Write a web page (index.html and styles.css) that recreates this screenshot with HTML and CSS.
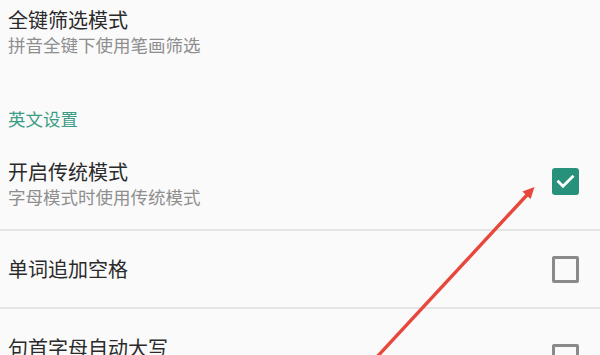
FILE: index.html
```html
<!DOCTYPE html>
<html lang="zh-CN">
<head>
<meta charset="utf-8">
<link rel="stylesheet" href="styles.css">
</head>
<body>
<div class="page">
  <div class="row first">
    <div class="texts">
      <div class="title">全键筛选模式</div>
      <div class="summary">拼音全键下使用笔画筛选</div>
    </div>
  </div>
  <div class="category">英文设置</div>
  <div class="row two-line divided">
    <div class="texts">
      <div class="title">开启传统模式</div>
      <div class="summary">字母模式时使用传统模式</div>
    </div>
    <span class="check checked">
      <svg viewBox="0 0 27 27" width="27" height="27"><polyline points="6.5,13.8 11,18.2 20.5,8.8" fill="none" stroke="#fff" stroke-width="2.8" stroke-linecap="square"/></svg>
    </span>
  </div>
  <div class="row single divided">
    <div class="texts">
      <div class="title">单词追加空格</div>
    </div>
    <span class="check"></span>
  </div>
  <div class="row last">
    <div class="texts">
      <div class="title">句首字母自动大写</div>
    </div>
    <span class="check low"></span>
  </div>
  <svg class="arrow" viewBox="0 0 600 355" width="600" height="355">
    <line x1="376" y1="358" x2="527" y2="195" stroke="#e8473c" stroke-width="3.4" stroke-linecap="round"/>
    <polygon points="534.5,187 530.6,199 522.4,191.5" fill="#e8473c"/>
  </svg>
</div>
</body>
</html>
```

FILE: styles.css
```css
html, body {
  margin: 0;
  padding: 0;
  background: #fafafa;
}
body {
  font-family: "Noto Sans CJK SC", "Noto Sans", sans-serif;
  width: 600px;
  height: 355px;
  overflow: hidden;
}
.page {
  position: relative;
  width: 600px;
  height: 355px;
  overflow: hidden;
}
.row {
  display: flex;
  align-items: center;
  justify-content: space-between;
  padding: 0 21px 0 8px;
  box-sizing: border-box;
}
.row.first {
  height: 90px;
  align-items: flex-start;
  padding-top: 7px;
}
.row.two-line {
  height: 95px;
  padding-top: 2px;
}
.row.single {
  height: 78px;
}
.row.divided {
  border-bottom: 2px solid #e4e4e4;
}
.row.last {
  height: 93px;
  align-items: flex-start;
  padding-top: 26px;
}
.title {
  font-size: 20px;
  line-height: 26px;
  color: #2a2a2a;
}
.summary {
  font-size: 17.5px;
  line-height: 24px;
  color: #8e8e8e;
}
.category {
  font-size: 17.5px;
  line-height: 24px;
  color: #3d9c85;
  padding: 17px 8px 5px;
}
.check {
  display: block;
  width: 27px;
  height: 27px;
  box-sizing: border-box;
  border: 3px solid #8a8a8a;
  border-radius: 2px;
  flex: none;
}
.check.checked {
  border: none;
  border-radius: 3px;
  background: #27917b;
  margin-bottom: 5px;
}
.check svg {
  display: block;
}
.check.low {
  margin-top: 9px;
}
.arrow {
  position: absolute;
  left: 0;
  top: 0;
  pointer-events: none;
}
```
